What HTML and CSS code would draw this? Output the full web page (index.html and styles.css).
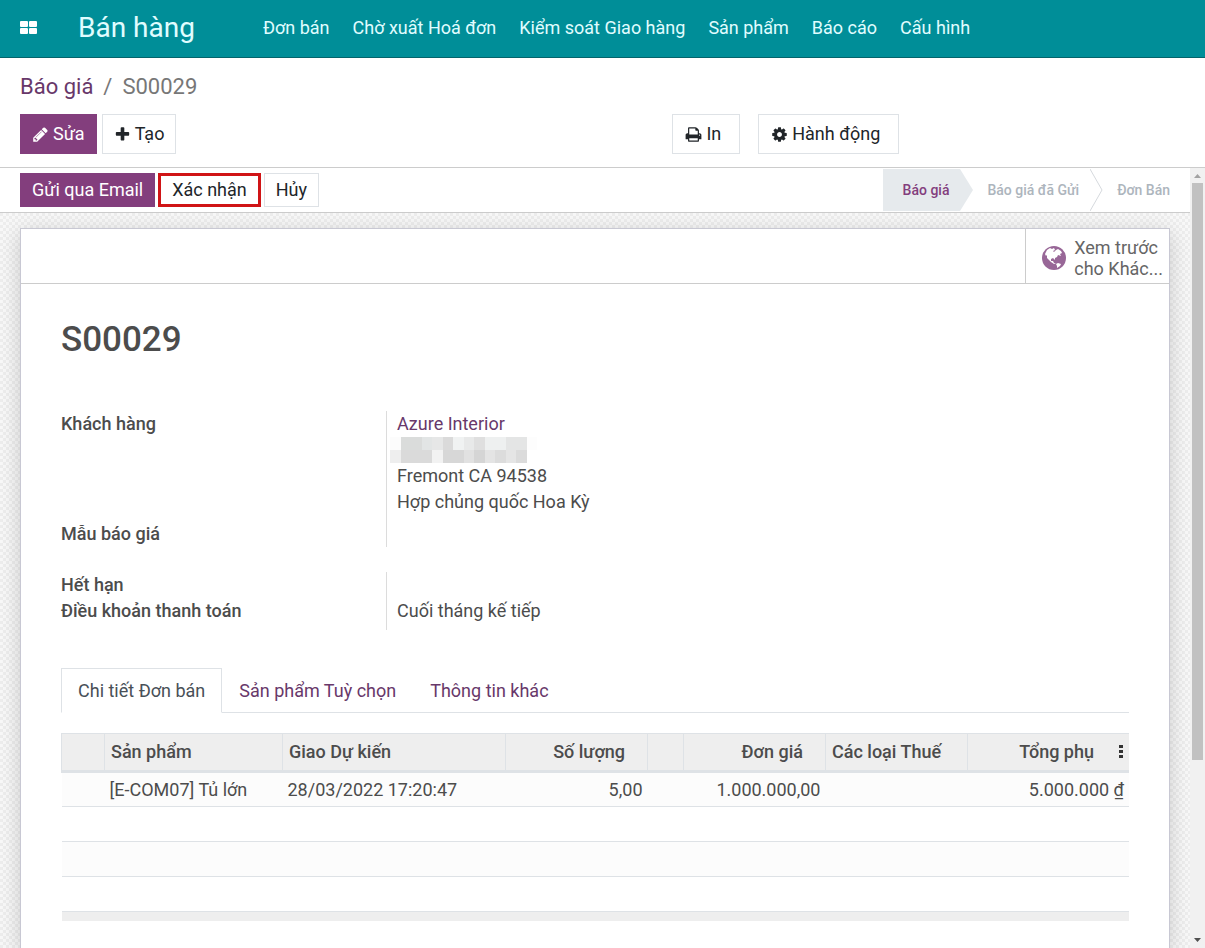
FILE: index.html
```html
<!DOCTYPE html>
<html lang="vi">
<head>
    <meta charset="UTF-8">
    <meta name="viewport" content="width=device-width, initial-scale=1">
    <title>S00029 - Bán hàng</title>
    <link rel="stylesheet" href="styles.css">
</head>
<body>
    <header class="navbar">
        <button class="apps-button" type="button" aria-label="Apps">
            <svg width="18" height="16" viewBox="0 0 18 16">
                <rect x="0" y="1" width="8" height="6" rx="1"/>
                <rect x="9" y="1" width="8" height="6" rx="1"/>
                <rect x="0" y="8" width="8" height="6" rx="1"/>
                <rect x="9" y="8" width="8" height="6" rx="1"/>
            </svg>
        </button>
        <a class="brand" href="#">Bán hàng</a>
        <nav class="menu">
            <a href="#">Đơn bán</a>
            <a href="#">Chờ xuất Hoá đơn</a>
            <a href="#">Kiểm soát Giao hàng</a>
            <a href="#">Sản phẩm</a>
            <a href="#">Báo cáo</a>
            <a href="#">Cấu hình</a>
        </nav>
    </header>

    <section class="control-panel">
        <div class="breadcrumb">
            <a href="#">Báo giá</a>
            <span>/</span>
            <span>S00029</span>
        </div>
        <div class="panel-buttons">
            <div class="panel-left">
                <button class="btn btn-primary" type="button">
                    <svg class="icon" viewBox="0 0 1792 1792"><path d="M491 1536l91-91-235-235-91 91v107h128v128h107zm523-928q0-22-22-22-10 0-17 7l-542 542q-7 7-7 17 0 22 22 22 10 0 17-7l542-542q7-7 7-17zm-54-192l416 416-832 832h-416v-416zm683 96q0 53-37 90l-166 166-416-416 166-165q36-38 90-38 53 0 91 38l235 234q37 39 37 91z"/></svg>
                    Sửa
                </button>
                <button class="btn" type="button">
                    <svg class="icon" viewBox="0 0 1792 1792"><path d="M1600 736v192q0 40-28 68t-68 28h-416v416q0 40-28 68t-68 28h-192q-40 0-68-28t-28-68v-416h-416q-40 0-68-28t-28-68v-192q0-40 28-68t68-28h416v-416q0-40 28-68t68-28h192q40 0 68 28t28 68v416h416q40 0 68 28t28 68z"/></svg>
                    Tạo
                </button>
            </div>
            <div class="panel-right">
                <button class="btn btn-menu" type="button">
                    <svg class="icon" viewBox="0 0 1792 1792"><path d="M448 1536h896v-256h-896v256zm0-640h896v-384h-160q-40 0-68-28t-28-68v-160h-640v640zm1152 64q0-26-19-45t-45-19-45 19-19 45 19 45 45 19 45-19 19-45zm128 0v416q0 13-9.500 22.500t-22.500 9.500h-224v160q0 40-28 68t-68 28h-960q-40 0-68-28t-28-68v-160h-224q-13 0-22.500-9.500t-9.500-22.500v-416q0-79 56.500-135.500t135.500-56.500h64v-544q0-40 28-68t68-28h672q40 0 88 20t76 48l152 152q28 28 48 76t20 88v256h64q79 0 135.500 56.500t56.500 135.500z"/></svg>
                    In
                </button>
                <button class="btn btn-menu" type="button">
                    <svg class="icon" viewBox="0 0 1792 1792"><path d="M1152 896q0-106-75-181t-181-75-181 75-75 181 75 181 181 75 181-75 75-181zm512-109v222q0 12-8 23t-20 13l-185 28q-19 54-39 91 35 50 107 138 10 12 10 25t-9 23q-27 37-99 108t-94 71q-12 0-26-9l-138-108q-44 23-91 38-16 136-29 186-7 28-36 28h-222q-14 0-24.500-8.500t-11.500-21.500l-28-184q-49-16-90-37l-141 107q-10 9-25 9-14 0-25-11-126-114-165-168-7-10-7-23 0-12 8-23 15-21 51-66.500t54-70.500q-27-50-41-99l-183-27q-13-2-21-12.500t-8-23.500v-222q0-12 8-23t19-13l186-28q14-46 39-92-40-57-107-138-10-12-10-24 0-10 9-23 26-36 98.500-107.500t94.500-71.500q13 0 26 10l138 107q44-23 91-38 16-136 29-186 7-28 36-28h222q14 0 24.500 8.500t11.500 21.500l28 184q49 16 90 37l142-107q9-9 24-9 13 0 25 10 129 119 165 170 7 8 7 22 0 12-8 23-15 21-51 66.500t-54 70.500q26 50 41 98l183 28q13 2 21 12.500t8 23.500z"/></svg>
                    Hành động
                </button>
            </div>
        </div>
    </section>

    <div class="content">
        <main class="form-view">
            <div class="statusbar">
                <div class="status-buttons">
                    <button class="btn btn-primary btn-status" type="button">Gửi qua Email</button>
                    <button class="btn btn-status btn-confirm" type="button">Xác nhận</button>
                    <button class="btn btn-status" type="button">Hủy</button>
                </div>
                <div class="steps">
                    <button class="step step-current" type="button">Báo giá</button>
                    <svg class="step-arrow" viewBox="0 0 13 42"><path d="M0 0L13 21L0 42z" fill="#e6eaed"/></svg>
                    <button class="step" type="button">Báo giá đã Gửi</button>
                    <svg class="step-arrow" viewBox="0 0 13 42"><path d="M0 0L12 21L0 42" fill="none" stroke="#d5d9dd"/></svg>
                    <button class="step step-last" type="button">Đơn Bán</button>
                </div>
            </div>

            <div class="sheet-bg">
                <div class="sheet">
                    <div class="button-box">
                        <button class="stat-button" type="button">
                            <svg width="24" height="24" viewBox="0 0 24 24">
                                <circle cx="12" cy="12" r="12" fill="#986797"/>
                                <path fill="#fff" d="M3 8L5 4L8 2L10 3L12 2L13 4L11 5L12 6L14 4L16 3L19 5L20 7L18 8L19 10L16 9L15 11L13 12L13 14L11 12L9 13L9 15L11 15L12 17L14 18L12 18L9 16L7 14L5 12L5 9L4 10z"/>
                                <path fill="#fff" d="M14 18L16 17L19 18L18 20L15 22L15 20z"/>
                            </svg>
                            <span>Xem trước<br>cho Khác...</span>
                        </button>
                    </div>

                    <div class="sheet-body">
                        <h1>S00029</h1>

                        <div class="group">
                            <div class="field-label">Khách hàng</div>
                            <div class="field-value address">
                                <a href="#">Azure Interior</a>
                                <svg class="redacted" viewBox="0 0 14 2" preserveAspectRatio="none" shape-rendering="crispEdges">
                                    <rect x="0" width="1" height="1" fill="#fcfcfc"/>
                                    <rect x="1" width="2" height="1" fill="#dadcdb"/>
                                    <rect x="3" width="1" height="1" fill="#e2e5e5"/>
                                    <rect x="4" width="1" height="1" fill="#e6e7e7"/>
                                    <rect x="5" width="1" height="1" fill="#dadada"/>
                                    <rect x="6" width="1" height="1" fill="#f0f2f2"/>
                                    <rect x="7" width="1" height="1" fill="#e8e9e9"/>
                                    <rect x="8" width="1" height="1" fill="#dfdfdf"/>
                                    <rect x="9" width="2" height="1" fill="#eef0f0"/>
                                    <rect x="11" width="2" height="1" fill="#e4e5e5"/>
                                    <rect x="13" width="1" height="1" fill="#fdfdfd"/>
                                    <rect x="0" y="1" width="1" height="1" fill="#eeeeee"/>
                                    <rect x="1" y="1" width="3" height="1" fill="#dadada"/>
                                    <rect x="4" y="1" width="1" height="1" fill="#f2f2f2"/>
                                    <rect x="5" y="1" width="2" height="1" fill="#d7d7d7"/>
                                    <rect x="7" y="1" width="1" height="1" fill="#e1e1e1"/>
                                    <rect x="8" y="1" width="1" height="1" fill="#d5d5d5"/>
                                    <rect x="9" y="1" width="1" height="1" fill="#e4e4e4"/>
                                    <rect x="10" y="1" width="1" height="1" fill="#dcdcdc"/>
                                    <rect x="11" y="1" width="1" height="1" fill="#e5e5e5"/>
                                    <rect x="12" y="1" width="1" height="1" fill="#dbdbdb"/>
                                </svg>
                                <span>Fremont CA 94538</span>
                                <span>Hợp chủng quốc Hoa Kỳ</span>
                            </div>
                            <div class="field-label">Mẫu báo giá</div>
                            <div class="field-value"></div>
                        </div>

                        <div class="group group-terms">
                            <div class="field-label">Hết hạn</div>
                            <div class="field-value"></div>
                            <div class="field-label">Điều khoản thanh toán</div>
                            <div class="field-value">Cuối tháng kế tiếp</div>
                        </div>

                        <div class="tabs">
                            <button class="tab tab-active" type="button">Chi tiết Đơn bán</button>
                            <button class="tab" type="button">Sản phẩm Tuỳ chọn</button>
                            <button class="tab" type="button">Thông tin khác</button>
                        </div>

                        <table class="lines">
                            <colgroup>
                                <col class="col-handle">
                                <col class="col-product">
                                <col class="col-date">
                                <col class="col-number">
                                <col class="col-extra">
                                <col class="col-number">
                                <col class="col-number">
                                <col>
                            </colgroup>
                            <thead>
                                <tr>
                                    <th></th>
                                    <th>Sản phẩm</th>
                                    <th>Giao Dự kiến</th>
                                    <th class="number">Số lượng</th>
                                    <th></th>
                                    <th class="number">Đơn giá</th>
                                    <th>Các loại Thuế</th>
                                    <th class="total">
                                        <div class="total-head">
                                            Tổng phụ
                                            <svg width="4" height="16" viewBox="0 0 4 16"><path d="M0 1h4v3H0zM0 6h4v3H0zM0 11h4v3H0z"/></svg>
                                        </div>
                                    </th>
                                </tr>
                            </thead>
                            <tbody>
                                <tr>
                                    <td></td>
                                    <td>[E-COM07] Tủ lớn</td>
                                    <td>28/03/2022 17:20:47</td>
                                    <td class="number">5,00</td>
                                    <td></td>
                                    <td class="number">1.000.000,00</td>
                                    <td></td>
                                    <td class="number">5.000.000 ₫</td>
                                </tr>
                                <tr><td colspan="8"></td></tr>
                                <tr><td colspan="8"></td></tr>
                                <tr><td colspan="8"></td></tr>
                            </tbody>
                            <tfoot>
                                <tr><td colspan="8"></td></tr>
                            </tfoot>
                        </table>
                    </div>
                </div>
            </div>
        </main>

        <div class="scrollbar">
            <svg width="15" height="15" viewBox="0 0 15 15"><path d="M4 10L7.500 6L11 10z" fill="#a3a3a3"/></svg>
            <div class="scroll-thumb"></div>
            <svg width="15" height="15" viewBox="0 0 15 15"><path d="M4 5L7.500 9L11 5z" fill="#505050"/></svg>
        </div>
    </div>
</body>
</html>
```
FILE: styles.css
```css
* {
    box-sizing: border-box;
}

body {
    margin: 0;
    height: 100vh;
    display: flex;
    flex-direction: column;
    overflow: hidden;
    background-color: #fff;
    color: #4c4c4c;
    font-family: Roboto, "Liberation Sans", sans-serif;
    font-size: 18px;
    line-height: 26px;
}

a {
    color: #68386a;
    text-decoration: none;
}

button {
    font-family: inherit;
    font-size: inherit;
    line-height: inherit;
    color: inherit;
    cursor: pointer;
}

/* top bar */
.navbar {
    flex: none;
    display: flex;
    align-items: center;
    height: 58px;
    padding: 0 20px 2px;
    background-color: #008e98;
    border-bottom: 1px solid #04646b;
}

.navbar a {
    color: #e0fdff;
}

.apps-button {
    display: flex;
    padding: 0;
    border: none;
    background: none;
    fill: #fff;
}

.brand {
    margin: 0 68px 0 40px;
    font-size: 28px;
}

.menu {
    display: flex;
    gap: 23px;
}

/* breadcrumb and main actions */
.control-panel {
    flex: none;
    padding: 14px 20px 13px;
    border-bottom: 1px solid #ccc;
}

.breadcrumb {
    display: flex;
    gap: 10px;
    margin-bottom: 12px;
    font-size: 22px;
    line-height: 30px;
    color: #777;
}

.panel-buttons {
    display: flex;
}

.panel-left {
    display: flex;
    gap: 5px;
    flex: 0 0 56%;
}

.panel-right {
    display: flex;
    gap: 18px;
}

.btn {
    display: flex;
    align-items: center;
    gap: 4px;
    height: 40px;
    padding: 0 11px;
    border: 1px solid #dee2e6;
    background-color: #fff;
    color: #212529;
    white-space: nowrap;
}

.btn-primary {
    border-color: #833e7d;
    background-color: #833e7d;
    color: #fff;
}

.btn-menu {
    padding: 0 18px 0 12px;
}

.icon {
    width: 17px;
    height: 17px;
    fill: currentColor;
}

/* scrolling part under the control panel */
.content {
    flex: 1;
    display: flex;
    min-height: 0;
}

.form-view {
    flex: 1;
    min-width: 0;
    display: flex;
    flex-direction: column;
    overflow: hidden;
}

.statusbar {
    flex: none;
    display: flex;
    justify-content: space-between;
    align-items: center;
    height: 45px;
    padding: 0 20px;
    border-bottom: 1px solid #ccc;
}

.status-buttons {
    display: flex;
    align-items: center;
    gap: 3px;
}

.btn-status {
    height: 34px;
}

.btn-confirm {
    border: 3px solid #d01416;
}

.steps {
    display: flex;
    height: 42px;
}

.step {
    padding: 0 11px 0 14px;
    border: none;
    background: none;
    font-size: 14px;
    font-weight: 500;
    color: #adb5bd;
}

.step-current {
    padding-left: 20px;
    background-color: #e6eaed;
    color: #833e7d;
}

.step-last {
    padding-right: 0;
}

.step-arrow {
    width: 13px;
    height: 42px;
}

.sheet-bg {
    flex: 1;
    padding: 15px 20px 0;
    background: repeating-conic-gradient(#f8f8f8 0 25%, #ededed 0 50%) 0 0 / 6px 6px;
}

.sheet {
    min-height: 100%;
    border: 1px solid #c8c8d3;
    border-bottom: none;
    background-color: #fff;
    box-shadow: 0 5px 20px rgba(0, 0, 0, 0.18);
}

.button-box {
    display: flex;
    justify-content: flex-end;
    border-bottom: 1px solid #ccc;
}

.stat-button {
    display: flex;
    align-items: center;
    gap: 8px;
    height: 54px;
    padding: 4px 6px 0 16px;
    border: none;
    border-left: 1px solid #ccc;
    background: none;
    color: #666;
    line-height: 21px;
    text-align: left;
}

.sheet-body {
    padding: 33px 40px 28px;
}

h1 {
    margin: 0 0 48px;
    font-size: 35px;
    line-height: 46px;
    font-weight: 500;
}

/* label / value pairs */
.group {
    display: grid;
    grid-template-columns: 325px 1fr;
    margin-bottom: 25px;
}

.field-label {
    font-weight: 500;
}

.field-value {
    display: flex;
    flex-direction: column;
    min-height: 26px;
    padding-left: 10px;
    border-left: 1px solid #dcdcdc;
}

.address {
    padding-bottom: 6px;
}

.group-terms {
    grid-template-rows: 26px 32px;
    margin-bottom: 38px;
}

.redacted {
    width: 147px;
    height: 26px;
    margin-left: -7px;
}

.tabs {
    display: flex;
    margin-bottom: 20px;
    border-bottom: 1px solid #dee2e6;
}

.tab {
    height: 45px;
    margin-bottom: -1px;
    padding: 0 16px;
    border: 1px solid transparent;
    background: none;
    color: #68386a;
}

.tab-active {
    border-color: #dee2e6 #dee2e6 #fff;
    background-color: #fff;
    color: #495057;
}

/* order lines */
.lines {
    width: 100%;
    table-layout: fixed;
    border-collapse: collapse;
}

.col-handle {
    width: 43px;
}

.col-product {
    width: 178px;
}

.col-date {
    width: 223px;
}

.col-number {
    width: 142px;
}

.col-extra {
    width: 36px;
}

.lines th {
    height: 38px;
    padding: 0 6px;
    border-top: 1px solid #dee2e6;
    border-left: 1px solid #dee2e6;
    border-bottom: 3px solid #dee2e6;
    background-color: #eee;
    font-weight: 500;
    text-align: left;
    white-space: nowrap;
}

.lines td {
    height: 35px;
    padding: 0 5px;
    border-bottom: 1px solid #dee2e6;
    white-space: nowrap;
}

.lines th.number {
    padding-right: 22px;
}

.lines .number {
    text-align: right;
}

.total-head {
    display: flex;
    justify-content: flex-end;
    align-items: center;
    gap: 25px;
    fill: #333;
}

.lines tbody tr:nth-child(odd) {
    background-color: #fcfcfc;
}

.lines tfoot td {
    height: 9px;
    border-bottom: none;
    background-color: #eee;
}

.scrollbar {
    flex: none;
    display: flex;
    flex-direction: column;
    width: 15px;
    background-color: #f1f1f1;
}

.scroll-thumb {
    flex: 0 0 74%;
    margin: 0 2px;
    background-color: #c1c1c1;
}

.scrollbar svg:last-child {
    margin-top: auto;
}
```
